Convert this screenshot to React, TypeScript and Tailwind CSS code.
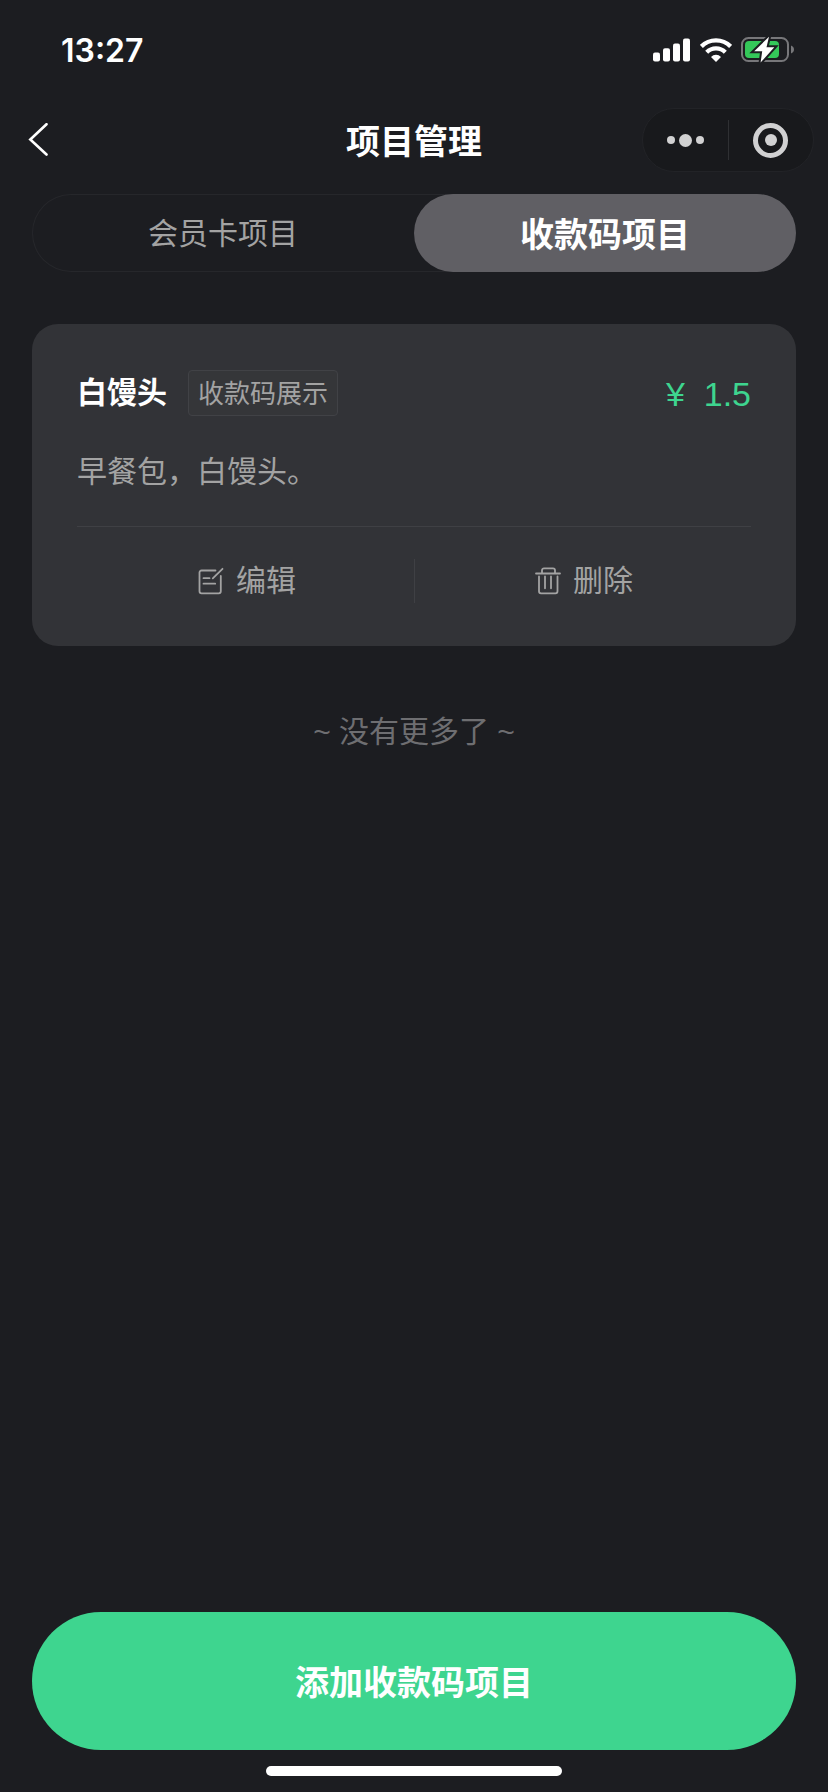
import { useState } from 'react';

interface Project {
  id: string;
  name: string;
  tag: string;
  description: string;
  price: string;
}

const TABS = ['会员卡项目', '收款码项目'];

const PROJECTS: Project[] = [
  { id: '1', name: '白馒头', tag: '收款码展示', description: '早餐包，白馒头。', price: '1.5' },
];

function SignalIcon() {
  return (
    <svg width="38" height="24" viewBox="0 0 38 24" fill="#fff">
      <rect x="0" y="14.4" width="7" height="9" rx="2" />
      <rect x="10" y="10.3" width="7" height="13.1" rx="2" />
      <rect x="20" y="5.4" width="7" height="18" rx="2" />
      <rect x="30" y="0.4" width="7" height="23" rx="2" />
    </svg>
  );
}

function WifiIcon() {
  return (
    <svg width="32" height="24" viewBox="0 0 32 24" fill="none" stroke="#fff">
      <path d="M1.4 8.4A20.6 20.6 0 0 1 30.6 8.4" strokeWidth="4.2" />
      <path d="M6.7 14.2A13 13 0 0 1 25.3 14.2" strokeWidth="4.2" />
      <path d="M16 24l-5-5.1a7 7 0 0 1 10 0z" fill="#fff" stroke="none" />
    </svg>
  );
}

function BatteryIcon() {
  return (
    <svg width="54" height="28" viewBox="0 0 54 28">
      <rect x="1" y="2" width="46" height="23" rx="6.5" fill="none" stroke="#77777a" strokeWidth="2" />
      <path d="M50 9.5v8c1.8-.7 3-2.2 3-4s-1.2-3.3-3-4z" fill="#77777a" />
      <rect x="4" y="5" width="34" height="17" rx="4" fill="#34c759" />
      <path
        d="M28 0.8L13.2 15.2h8L19.600 26.6 33.300 11.200h-7.800z"
        fill="#fff"
        stroke="#1c1d21"
        strokeWidth="4"
        paintOrder="stroke"
      />
    </svg>
  );
}

function EditIcon() {
  return (
    <svg width="26" height="28" viewBox="0 0 26 28" fill="none" stroke="#a3a3a3" strokeWidth="1.8" strokeLinecap="round">
      <path d="M17.500 3.500H3.500a2 2 0 0 0-2 2v18.800a2 2 0 0 0 2 2h17.300a2 2 0 0 0 2-2V9" />
      <path d="M24.500 1.800l-9.700 9.600M5.500 11.200h6M5.500 16.700h11.700" />
    </svg>
  );
}

function TrashIcon() {
  return (
    <svg width="26" height="28" viewBox="0 0 26 28" fill="none" stroke="#a3a3a3" strokeWidth="1.8" strokeLinecap="round">
      <path d="M1 6.500h24M7 6V3.300a2 2 0 0 1 2-2h9a2 2 0 0 1 2 2V6" />
      <path d="M4 9.500v14.800a2 2 0 0 0 2 2h14.500a2 2 0 0 0 2-2V9.500M10 9.500v11.800M16 9.500v11.800" />
    </svg>
  );
}

function StatusBar() {
  return (
    <div className="flex h-24 items-start justify-between pl-[61px] pr-[33px]">
      <span className="mt-[31px] font-['Inter'] text-[32px] font-semibold leading-10">13:27</span>
      <div className="mt-9 flex items-center">
        <SignalIcon />
        <div className="ml-[9px]">
          <WifiIcon />
        </div>
        <div className="ml-[9px]">
          <BatteryIcon />
        </div>
      </div>
    </div>
  );
}

function NavBar() {
  return (
    <div className="grid h-[88px] grid-cols-[1fr_auto_1fr] items-center px-3.5">
      <button className="flex h-10 w-14 items-center pl-3.5">
        <svg width="21" height="34" viewBox="0 0 21 34" fill="none" stroke="#fff" strokeWidth="2.6" strokeLinecap="round">
          <path d="M18.500 1.200L2.300 16.500l16.200 15" />
        </svg>
      </button>
      <h1 className="pb-px text-[34px] font-semibold leading-none">项目管理</h1>
      <div className="flex h-16 w-[172px] items-center justify-self-end rounded-full border border-[#222327] bg-[#18191c]">
        <div className="flex flex-1 items-center justify-center gap-1">
          <i className="h-2 w-2 rounded-full bg-[#d1d1d2]" />
          <i className="h-[13px] w-[13px] rounded-full bg-[#d1d1d2]" />
          <i className="h-2 w-2 rounded-full bg-[#d1d1d2]" />
        </div>
        <div className="h-10 w-px bg-[#2f3033]" />
        <div className="flex flex-1 justify-center">
          <div className="flex h-[35px] w-[35px] items-center justify-center rounded-full border-5 border-[#d1d1d2]">
            <i className="h-3 w-3 rounded-full bg-[#d1d1d2]" />
          </div>
        </div>
      </div>
    </div>
  );
}

function ProjectCard({ project }: { project: Project }) {
  return (
    <div className="h-[322px] rounded-[26px] bg-[#323337] px-[45px] pt-[46px] font-['Liberation_Sans','Noto_Sans_CJK_SC',sans-serif]">
      <div className="flex h-[46px] items-center">
        <h2 className="text-[30px] font-semibold leading-none">{project.name}</h2>
        <span className="ml-[21px] flex h-[46px] items-center rounded-sm border border-[#414246] bg-[#353639] px-[9px] pt-0.5 text-[26px] leading-none text-[#a3a3a3]">
          {project.tag}
        </span>
        <span className="ml-auto pt-0.5 text-[34px] leading-none text-[#3ed58f]">¥&nbsp;&nbsp;{project.price}</span>
      </div>
      <p className="mt-[38px] text-[30px] leading-9 text-[#a3a3a3]">{project.description}</p>
      <div className="mt-9 flex items-center border-t border-[#3f4044] pt-8">
        <button className="flex flex-1 items-center justify-center gap-3 pl-[3px] text-[30px] leading-none text-[#a3a3a3]">
          <EditIcon />
          <span>编辑</span>
        </button>
        <div className="h-11 w-px bg-[#3f4044]" />
        <button className="flex flex-1 items-center justify-center gap-3 pl-0.5 text-[30px] leading-none text-[#a3a3a3]">
          <TrashIcon />
          <span>删除</span>
        </button>
      </div>
    </div>
  );
}

export default function App() {
  const [activeTab, setActiveTab] = useState(1);

  return (
    <div className="flex h-[1792px] w-[828px] flex-col bg-[#1c1d21] font-['Noto_Sans_CJK_SC',sans-serif] text-white">
      <StatusBar />
      <NavBar />
      <div className="mx-8 mt-2.5 flex h-[78px] rounded-full ring-1 ring-inset ring-[#26272b]">
        {TABS.map((tab, i) => (
          <button
            key={tab}
            onClick={() => setActiveTab(i)}
            className={`flex-1 rounded-full leading-none ${
              activeTab === i ? 'bg-[#605f64] text-[34px] font-semibold' : 'pb-1 text-[30px] text-[#a3a3a3]'
            }`}
          >
            {tab}
          </button>
        ))}
      </div>
      <main className="flex-1 px-8 pt-[52px]">
        {PROJECTS.map((project) => (
          <ProjectCard key={project.id} project={project} />
        ))}
        <p className="mt-[68px] text-center font-['Liberation_Sans','Noto_Sans_CJK_SC',sans-serif] text-[30px] leading-9 text-[#6e6e71]">
          ~ 没有更多了 ~
        </p>
      </main>
      <footer className="flex flex-col items-center px-8 pb-4">
        <button className="h-[138px] w-full rounded-full bg-[#3ed58f] pb-0.5 text-[34px] font-semibold">
          添加收款码项目
        </button>
        <div className="mt-4 h-2.5 w-[296px] rounded-full bg-white" />
      </footer>
    </div>
  );
}
